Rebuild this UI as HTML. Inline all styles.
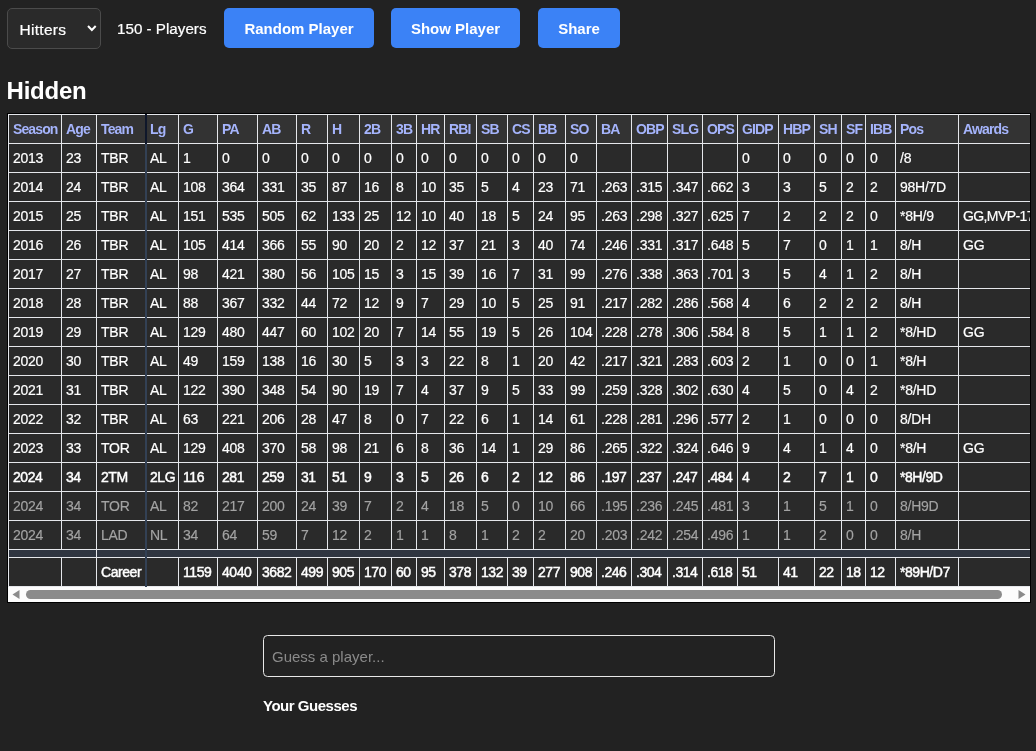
<!DOCTYPE html>
<html><head><meta charset="utf-8"><title>Guess the player</title>
<style>
html,body{margin:0;padding:0;}
body{width:1036px;height:751px;overflow:hidden;background:#222222;color:#ffffff;font-family:"Liberation Sans",sans-serif;font-size:15px;position:relative;}
.abs{position:absolute;box-sizing:border-box;}
.sel{-webkit-text-stroke:0.2px #ffffff;left:7px;top:8px;width:94px;height:41px;border:1px solid #4b4b4b;border-radius:5px;background:#2a2a2a;font-size:15.5px;letter-spacing:0.3px;line-height:41px;padding-left:11.5px;color:#ffffff;}
.sel svg{position:absolute;left:78px;top:14px;}
.cnt{-webkit-text-stroke:0.2px #ffffff;left:117px;top:8px;height:40px;line-height:41px;font-size:15.2px;color:#ffffff;white-space:nowrap;}
.btn{top:8px;height:40px;background:#3b82f6;border-radius:5px;color:#fff;font-weight:bold;font-size:15px;line-height:41px;text-align:center;white-space:nowrap;}
h2{position:absolute;left:6.6px;top:74.3px;margin:0;font-size:24px;letter-spacing:-0.25px;line-height:34px;font-weight:bold;color:#ffffff;}
.wrap{left:7px;top:113px;width:1024px;height:490px;border:1px solid #000;overflow:hidden;background:#2a2a2a;}
table{border-collapse:collapse;table-layout:fixed;width:1053px;margin:0;}
tr{height:29px;}
th,td{border:1px solid #e5e7eb;padding:0 0 0 4px;box-sizing:border-box;text-align:left;white-space:nowrap;overflow:hidden;font-size:14px;line-height:16px;}
th{background:#333333;color:#a5b4fc;font-weight:bold;letter-spacing:-0.88px;}
td{background:#2a2a2a;color:#ffffff;letter-spacing:-0.25px;-webkit-text-stroke:0.2px #ffffff;}
tr.part td{color:#a3a3a3;-webkit-text-stroke:0.15px #a3a3a3;}
tr.semi td{-webkit-text-stroke:0.45px #ffffff;letter-spacing:-0.45px;}
td.aw{letter-spacing:-0.6px;}
tr.sep{height:8px;}
tr.sep td{background:#2f3540;padding:0;line-height:0;font-size:0;}
.vl{width:2px;left:137px;}
.sb{left:0;top:473px;width:1022px;height:15px;background:#fcfcfc;}
.sb .thumb{position:absolute;left:18px;top:3px;width:976px;height:9px;border-radius:4.5px;background:#8b8b8b;}
.inp{left:263px;top:635px;width:512px;height:42px;border:1px solid #e8e8e8;border-radius:4.5px;background:#222222;color:#8a8a8a;font-size:15px;line-height:41.5px;padding-left:8px;}
.yg{left:263px;top:696px;font-weight:bold;font-size:15px;letter-spacing:-0.48px;line-height:20px;color:#ffffff;white-space:nowrap;}
#root{position:absolute;left:0;top:0;width:1036px;height:751px;will-change:transform;}
</style></head><body><div id="root">
<div class="abs sel">Hitters<svg width="14" height="12" viewBox="0 0 14 12"><path d="M2.0 3.0 L5.85 7.0 L9.7 3.0" fill="none" stroke="#ffffff" stroke-width="2"/></svg></div>
<div class="abs cnt">150 - Players</div>
<div class="abs btn" style="left:224px;width:150px;">Random Player</div>
<div class="abs btn" style="left:391px;width:129px;">Show Player</div>
<div class="abs btn" style="left:538px;width:82px;">Share</div>
<h2>Hidden</h2>
<div class="abs wrap">
<table>
<colgroup><col style="width:53px"><col style="width:35px"><col style="width:49px"><col style="width:33px"><col style="width:39px"><col style="width:40px"><col style="width:39px"><col style="width:31px"><col style="width:32px"><col style="width:32px"><col style="width:25px"><col style="width:28px"><col style="width:32px"><col style="width:31px"><col style="width:26px"><col style="width:32px"><col style="width:31px"><col style="width:35px"><col style="width:36px"><col style="width:35px"><col style="width:35px"><col style="width:41px"><col style="width:36px"><col style="width:27px"><col style="width:24px"><col style="width:30px"><col style="width:63px"><col style="width:102px"></colgroup>
<tr class="h"><th>Season</th><th>Age</th><th>Team</th><th>Lg</th><th>G</th><th>PA</th><th>AB</th><th>R</th><th>H</th><th>2B</th><th>3B</th><th>HR</th><th>RBI</th><th>SB</th><th>CS</th><th>BB</th><th>SO</th><th>BA</th><th>OBP</th><th>SLG</th><th>OPS</th><th>GIDP</th><th>HBP</th><th>SH</th><th>SF</th><th>IBB</th><th>Pos</th><th>Awards</th></tr>
<tr><td>2013</td><td>23</td><td>TBR</td><td>AL</td><td>1</td><td>0</td><td>0</td><td>0</td><td>0</td><td>0</td><td>0</td><td>0</td><td>0</td><td>0</td><td>0</td><td>0</td><td>0</td><td></td><td></td><td></td><td></td><td>0</td><td>0</td><td>0</td><td>0</td><td>0</td><td>/8</td><td></td></tr>
<tr><td>2014</td><td>24</td><td>TBR</td><td>AL</td><td>108</td><td>364</td><td>331</td><td>35</td><td>87</td><td>16</td><td>8</td><td>10</td><td>35</td><td>5</td><td>4</td><td>23</td><td>71</td><td>.263</td><td>.315</td><td>.347</td><td>.662</td><td>3</td><td>3</td><td>5</td><td>2</td><td>2</td><td>98H/7D</td><td></td></tr>
<tr><td>2015</td><td>25</td><td>TBR</td><td>AL</td><td>151</td><td>535</td><td>505</td><td>62</td><td>133</td><td>25</td><td>12</td><td>10</td><td>40</td><td>18</td><td>5</td><td>24</td><td>95</td><td>.263</td><td>.298</td><td>.327</td><td>.625</td><td>7</td><td>2</td><td>2</td><td>2</td><td>0</td><td>*8H/9</td><td class="aw">GG,MVP-17</td></tr>
<tr><td>2016</td><td>26</td><td>TBR</td><td>AL</td><td>105</td><td>414</td><td>366</td><td>55</td><td>90</td><td>20</td><td>2</td><td>12</td><td>37</td><td>21</td><td>3</td><td>40</td><td>74</td><td>.246</td><td>.331</td><td>.317</td><td>.648</td><td>5</td><td>7</td><td>0</td><td>1</td><td>1</td><td>8/H</td><td>GG</td></tr>
<tr><td>2017</td><td>27</td><td>TBR</td><td>AL</td><td>98</td><td>421</td><td>380</td><td>56</td><td>105</td><td>15</td><td>3</td><td>15</td><td>39</td><td>16</td><td>7</td><td>31</td><td>99</td><td>.276</td><td>.338</td><td>.363</td><td>.701</td><td>3</td><td>5</td><td>4</td><td>1</td><td>2</td><td>8/H</td><td></td></tr>
<tr><td>2018</td><td>28</td><td>TBR</td><td>AL</td><td>88</td><td>367</td><td>332</td><td>44</td><td>72</td><td>12</td><td>9</td><td>7</td><td>29</td><td>10</td><td>5</td><td>25</td><td>91</td><td>.217</td><td>.282</td><td>.286</td><td>.568</td><td>4</td><td>6</td><td>2</td><td>2</td><td>2</td><td>8/H</td><td></td></tr>
<tr><td>2019</td><td>29</td><td>TBR</td><td>AL</td><td>129</td><td>480</td><td>447</td><td>60</td><td>102</td><td>20</td><td>7</td><td>14</td><td>55</td><td>19</td><td>5</td><td>26</td><td>104</td><td>.228</td><td>.278</td><td>.306</td><td>.584</td><td>8</td><td>5</td><td>1</td><td>1</td><td>2</td><td>*8/HD</td><td>GG</td></tr>
<tr><td>2020</td><td>30</td><td>TBR</td><td>AL</td><td>49</td><td>159</td><td>138</td><td>16</td><td>30</td><td>5</td><td>3</td><td>3</td><td>22</td><td>8</td><td>1</td><td>20</td><td>42</td><td>.217</td><td>.321</td><td>.283</td><td>.603</td><td>2</td><td>1</td><td>0</td><td>0</td><td>1</td><td>*8/H</td><td></td></tr>
<tr><td>2021</td><td>31</td><td>TBR</td><td>AL</td><td>122</td><td>390</td><td>348</td><td>54</td><td>90</td><td>19</td><td>7</td><td>4</td><td>37</td><td>9</td><td>5</td><td>33</td><td>99</td><td>.259</td><td>.328</td><td>.302</td><td>.630</td><td>4</td><td>5</td><td>0</td><td>4</td><td>2</td><td>*8/HD</td><td></td></tr>
<tr><td>2022</td><td>32</td><td>TBR</td><td>AL</td><td>63</td><td>221</td><td>206</td><td>28</td><td>47</td><td>8</td><td>0</td><td>7</td><td>22</td><td>6</td><td>1</td><td>14</td><td>61</td><td>.228</td><td>.281</td><td>.296</td><td>.577</td><td>2</td><td>1</td><td>0</td><td>0</td><td>0</td><td>8/DH</td><td></td></tr>
<tr><td>2023</td><td>33</td><td>TOR</td><td>AL</td><td>129</td><td>408</td><td>370</td><td>58</td><td>98</td><td>21</td><td>6</td><td>8</td><td>36</td><td>14</td><td>1</td><td>29</td><td>86</td><td>.265</td><td>.322</td><td>.324</td><td>.646</td><td>9</td><td>4</td><td>1</td><td>4</td><td>0</td><td>*8/H</td><td>GG</td></tr>
<tr class="semi"><td>2024</td><td>34</td><td>2TM</td><td>2LG</td><td>116</td><td>281</td><td>259</td><td>31</td><td>51</td><td>9</td><td>3</td><td>5</td><td>26</td><td>6</td><td>2</td><td>12</td><td>86</td><td>.197</td><td>.237</td><td>.247</td><td>.484</td><td>4</td><td>2</td><td>7</td><td>1</td><td>0</td><td>*8H/9D</td><td></td></tr>
<tr class="part"><td>2024</td><td>34</td><td>TOR</td><td>AL</td><td>82</td><td>217</td><td>200</td><td>24</td><td>39</td><td>7</td><td>2</td><td>4</td><td>18</td><td>5</td><td>0</td><td>10</td><td>66</td><td>.195</td><td>.236</td><td>.245</td><td>.481</td><td>3</td><td>1</td><td>5</td><td>1</td><td>0</td><td>8/H9D</td><td></td></tr>
<tr class="part"><td>2024</td><td>34</td><td>LAD</td><td>NL</td><td>34</td><td>64</td><td>59</td><td>7</td><td>12</td><td>2</td><td>1</td><td>1</td><td>8</td><td>1</td><td>2</td><td>2</td><td>20</td><td>.203</td><td>.242</td><td>.254</td><td>.496</td><td>1</td><td>1</td><td>2</td><td>0</td><td>0</td><td>8/H</td><td></td></tr>
<tr class="sep"><td colspan="2"></td><td colspan="26"></td></tr>
<tr class="semi"><td></td><td></td><td>Career</td><td></td><td>1159</td><td>4040</td><td>3682</td><td>499</td><td>905</td><td>170</td><td>60</td><td>95</td><td>378</td><td>132</td><td>39</td><td>277</td><td>908</td><td>.246</td><td>.304</td><td>.314</td><td>.618</td><td>51</td><td>41</td><td>22</td><td>18</td><td>12</td><td>*89H/D7</td><td></td></tr>
</table>
<div class="abs vl" style="top:0;height:30px;background:#0f172a;"></div>
<div class="abs vl" style="top:30px;height:443px;background:#334155;"></div>
<div class="abs sb"><div class="thumb"></div>
<svg class="abs" style="left:4px;top:3px" width="8" height="9" viewBox="0 0 8 9"><path d="M0.5 4.5 L7.5 0 L7.5 9 Z" fill="#8b8b8b"/></svg>
<svg class="abs" style="left:1010px;top:3px" width="8" height="9" viewBox="0 0 8 9"><path d="M7.5 4.5 L0.5 0 L0.5 9 Z" fill="#8b8b8b"/></svg>
</div>
</div>
<div class="abs inp">Guess a player...</div>
<div class="abs yg">Your Guesses</div>
</div></body></html>
